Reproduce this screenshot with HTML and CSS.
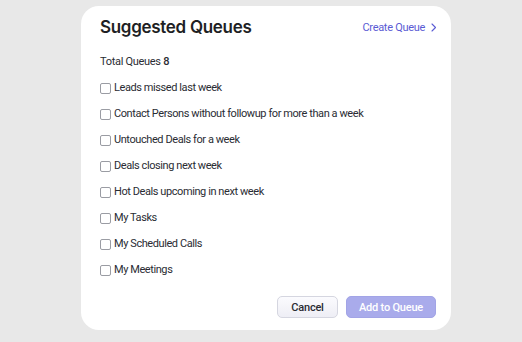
FILE: index.html
```html
<!DOCTYPE html>
<html>
<head>
<meta charset="utf-8">
<link rel="stylesheet" href="styles.css">
</head>
<body>
<div class="card">
  <div class="header">
    <h1 class="title">Suggested Queues</h1>
    <a class="create">Create Queue
      <svg class="chev" width="6" height="9" viewBox="0 0 6 9"><path d="M1 1l3.5 3.5L1 8" fill="none" stroke="#5a5bd4" stroke-width="1.1" stroke-linecap="round" stroke-linejoin="round"/></svg>
    </a>
  </div>
  <div class="total">Total Queues <b>8</b></div>
  <ul class="list">
    <li class="item"><span class="box"></span>Leads missed last week</li>
    <li class="item"><span class="box"></span>Contact Persons without followup for more than a week</li>
    <li class="item"><span class="box"></span>Untouched Deals for a week</li>
    <li class="item"><span class="box"></span>Deals closing next week</li>
    <li class="item"><span class="box"></span>Hot Deals upcoming in next week</li>
    <li class="item"><span class="box"></span>My Tasks</li>
    <li class="item"><span class="box"></span>My Scheduled Calls</li>
    <li class="item"><span class="box"></span>My Meetings</li>
  </ul>
  <div class="footer">
    <button class="btn cancel">Cancel</button>
    <button class="btn add">Add to Queue</button>
  </div>
</div>
</body>
</html>
```
FILE: styles.css
```css
html, body { margin: 0; padding: 0; }
body {
  background: #e8e8e8;
  font-family: Roboto, "Noto Sans", sans-serif;
  color: #2a2c33;
  width: 522px;
  height: 342px;
  overflow: hidden;
}
.card {
  margin: 6px 0 0 81px;
  width: 370px;
  height: 324px;
  box-sizing: border-box;
  background: #fff;
  border-radius: 18px;
  padding: 9px 14px 0 19px;
  display: flex;
  flex-direction: column;
}
.header {
  display: flex;
  justify-content: space-between;
  align-items: center;
  height: 24px;
}
.title {
  margin: 0;
  font-family: Inter, "Noto Sans", sans-serif;
  font-size: 17px;
  font-weight: 600;
  letter-spacing: -0.3px;
  color: #1e1f24;
}
.create {
  font-size: 11px;
  letter-spacing: -0.3px;
  color: #5a5bd4;
  display: flex;
  align-items: center;
  gap: 6px;
  padding-top: 1px;
}
.total {
  margin-top: 16px;
  font-size: 11px;
  line-height: 14px;
  letter-spacing: -0.3px;
}
.total b { font-weight: 500; }
.list {
  list-style: none;
  margin: 12px 0 0;
  padding: 0;
  display: flex;
  flex-direction: column;
  gap: 12px;
}
.item {
  display: flex;
  align-items: center;
  font-size: 11px;
  line-height: 14px;
  letter-spacing: -0.42px;
  color: #2a2c33;
}
.box {
  width: 9px;
  height: 9px;
  border: 1px solid #9a9ca3;
  border-radius: 2px;
  margin-right: 3px;
  flex: none;
}
.footer {
  margin-top: auto;
  margin-bottom: 12px;
  padding-right: 1px;
  display: flex;
  justify-content: flex-end;
  gap: 8px;
}
.btn {
  height: 22px;
  border-radius: 5px;
  font-family: Roboto, "Noto Sans", sans-serif;
  font-size: 11px;
  font-weight: 500;
  letter-spacing: -0.2px;
  padding: 0;
}
.cancel {
  width: 61px;
  background: linear-gradient(#fbfbfe, #eeeef5);
  border: 1px solid #d5d6e0;
  color: #2a2c33;
}
.add {
  width: 90px;
  background: #a9abeb;
  border: 1px solid #a2a4e6;
  color: #fff;
}
```
